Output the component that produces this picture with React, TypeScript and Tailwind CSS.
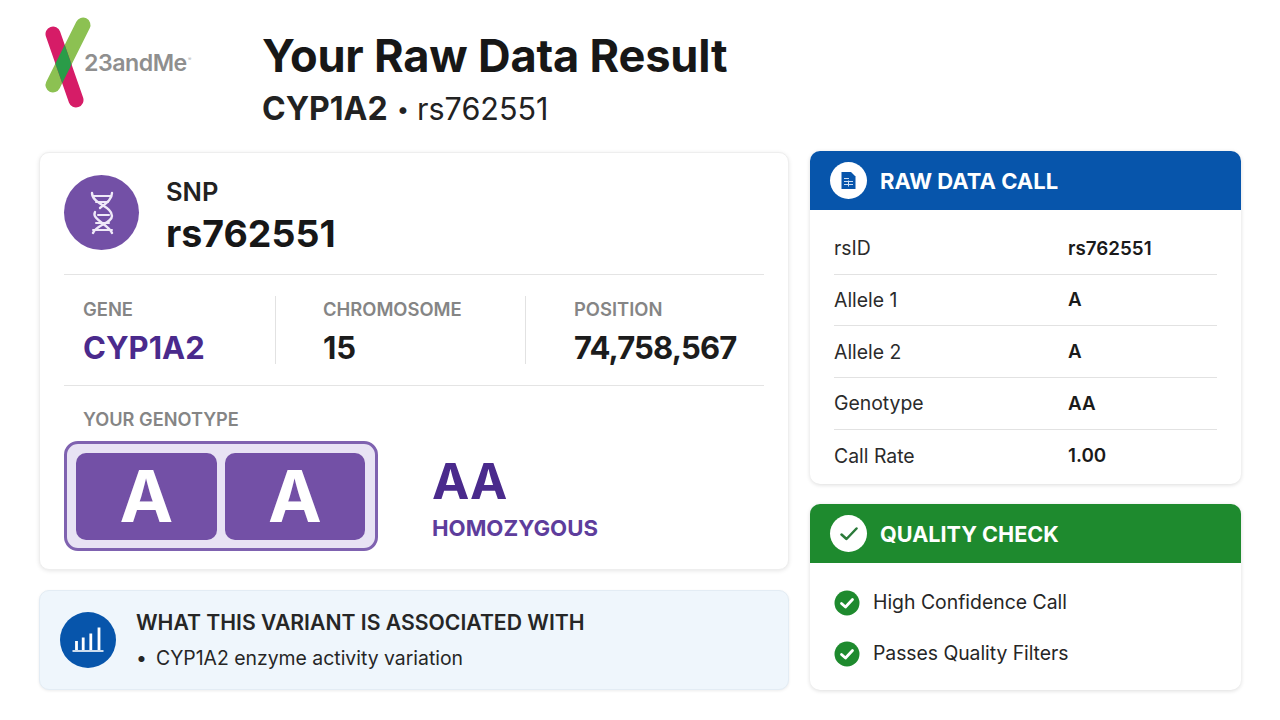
import React from "react";

const font = { fontFamily: "Inter, 'Liberation Sans', sans-serif" };

function Logo() {
  return (
    <div className="relative w-[155px] h-[100px]">
      <svg width="60" height="100" viewBox="0 0 60 100" className="absolute left-0 top-0">
        <defs>
          <clipPath id="band">
            <polygon points="21.08,23.53 44.08,89.53 29.92,94.47 6.92,28.47" />
          </clipPath>
        </defs>
        <line x1="44" y1="17" x2="14" y2="77" stroke="#8cc152" strokeWidth="15" strokeLinecap="round" />
        <line x1="14" y1="26" x2="37" y2="92" stroke="#d61c67" strokeWidth="15" strokeLinecap="round" />
        <line x1="44" y1="17" x2="14" y2="77" stroke="#2a9c48" strokeWidth="15" clipPath="url(#band)" />
      </svg>
      <span className="absolute left-[45px] top-[41px] text-[23.2px] leading-[28px] font-semibold tracking-[-0.5px] text-[#8f8f8f]">23andMe</span>
      <span className="absolute left-[149px] top-[48px] text-[5px] leading-[6px] text-[#aaaaaa]">®</span>
    </div>
  );
}

function Dna() {
  return (
    <svg width="26" height="44" viewBox="0 0 26 44" fill="none" stroke="#efe9f8" strokeWidth="2.4" strokeLinecap="round">
      <path d="M3 2 C3 13 23 15 23 25 C23 32 7 34 4 42" />
      <path d="M23 2 C23 9 16 13 11 17 M6 21 C2 28 20 34 23 42" />
      <path d="M4 5 H22 M7 11 H19 M9 24 H20 M7 32 H20 M4 39 H23" strokeWidth="2" />
    </svg>
  );
}

function Stat({ label, value, color, cls }: { label: string; value: string; color: string; cls: string }) {
  return (
    <div className={cls}>
      <div className="pt-[1px] text-[18.4px] leading-[24px] font-semibold text-[#858585]">{label}</div>
      <div className={`mt-[8px] text-[31px] leading-[38px] font-bold ${color}`}>{value}</div>
    </div>
  );
}

function Row({ k, v, last }: { k: string; v: string; last?: boolean }) {
  return (
    <div className={`flex items-center h-[51.7px] pt-px ${last ? "" : "border-b border-[#e2e2e2]"}`}>
      <span className="w-[234px] text-[19.4px] text-[#2b2b2b]">{k}</span>
      <span className="text-[18.8px] font-semibold text-[#1a1a1a]">{v}</span>
    </div>
  );
}

function Check() {
  return (
    <svg width="26" height="26" viewBox="0 0 26 26">
      <circle cx="13" cy="13" r="12.5" fill="#1e8a2e" />
      <path d="M7.5 13.5 L11.5 17 L18.5 9.5" fill="none" stroke="#fff" strokeWidth="2.8" strokeLinecap="round" strokeLinejoin="round" />
    </svg>
  );
}

export default function App() {
  return (
    <div style={font} className="w-[1280px] h-[720px] bg-white overflow-hidden px-[39px]">
      <header className="flex h-[151px]">
        <div className="pt-[8px] w-[224px] shrink-0"><Logo /></div>
        <div className="pt-[28px]">
          <h1 className="text-[45.2px] leading-[56px] font-bold tracking-[-0.2px] text-[#171717] -ml-px">Your Raw Data Result</h1>
          <p className="mt-[3px] text-[30.5px] leading-[44px] text-[#222222] flex items-center -ml-px">
            <span className="text-[32px] font-bold">CYP1A2</span>
            <span className="ml-[9px] mr-[8px] text-[22px]">•</span>
            <span>rs762551</span>
          </p>
        </div>
      </header>
      <div className="flex gap-[21px]">
        <div className="w-[750px] shrink-0 flex flex-col gap-[20px] pt-px">
          <section className="h-[418px] rounded-[10px] bg-white border border-[#eeeeee] shadow-[0_1px_4px_rgba(0,0,0,0.10)] px-[24px]">
            <div className="flex items-center h-[122px] border-b border-[#e4e4e4] pb-[2px]">
              <div className="w-[75px] h-[75px] rounded-full bg-[#7350a6] flex items-center justify-center"><Dna /></div>
              <div className="ml-[27px] pt-[8px]">
                <div className="text-[25.5px] leading-[30px] font-semibold text-[#222222]">SNP</div>
                <div className="mt-[4px] text-[37.5px] leading-[46px] font-bold text-[#171717]">rs762551</div>
              </div>
            </div>
            <div className="flex items-center h-[111px] border-b border-[#e4e4e4]">
              <Stat cls="w-[212px] pl-[19px] h-[68px] border-r border-[#e2e2e2]" label="GENE" value="CYP1A2" color="text-[#4a2a8c]" />
              <Stat cls="w-[250px] pl-[47px] h-[68px] border-r border-[#e2e2e2]" label="CHROMOSOME" value="15" color="text-[#1c1c1c]" />
              <Stat cls="pl-[48px] h-[68px]" label="POSITION" value="74,758,567" color="text-[#1c1c1c] tracking-[-0.85px]" />
            </div>
            <div className="pl-[19px] pt-[21px] text-[18.2px] leading-[24px] font-semibold text-[#858585]">YOUR GENOTYPE</div>
            <div className="flex items-center mt-[10px]">
              <div className="w-[314px] h-[110px] rounded-[14px] border-[3px] border-[#7f62b0] bg-[#e8e3f4] flex items-center gap-[8px] px-[9px]">
                <div className="w-[141px] h-[87px] rounded-[10px] bg-[#7350a6] flex items-center justify-center text-[72px] font-bold text-white">A</div>
                <div className="w-[140px] h-[87px] rounded-[10px] bg-[#7350a6] flex items-center justify-center text-[72px] font-bold text-white">A</div>
              </div>
              <div className="ml-[54px] pt-[3px]">
                <div className="text-[50px] leading-[54px] font-bold text-[#4a2a8c]">AA</div>
                <div className="mt-[6px] text-[22.2px] leading-[28px] font-bold text-[#5e3d9c]">HOMOZYGOUS</div>
              </div>
            </div>
          </section>
          <section className="h-[100px] rounded-[10px] bg-[#eff6fc] border border-[#e3ecf4] shadow-[0_1px_3px_rgba(0,0,0,0.08)] flex items-center pl-[20px]">
            <div className="w-[56px] h-[56px] rounded-full bg-[#0755ab] flex items-center justify-center">
              <svg width="34" height="30" viewBox="0 0 34 30" fill="none" stroke="#fff">
                <path d="M1.5 26 H32.5" strokeWidth="1.6" />
                <path d="M5.5 25 V16 M12.2 25 V12.5 M19.8 25 V8.5 M28 25 V2.5" strokeWidth="2.8" />
              </svg>
            </div>
            <div className="ml-[20px] pb-[2px]">
              <div className="text-[21.2px] leading-[28px] font-semibold text-[#262626]">WHAT THIS VARIANT IS ASSOCIATED WITH</div>
              <div className="mt-[10px] text-[19.4px] leading-[24px] text-[#262626] flex"><span className="w-[20px]">•</span>CYP1A2 enzyme activity variation</div>
            </div>
          </section>
        </div>
        <div className="w-[431px] shrink-0 flex flex-col gap-[20px]">
          <section className="h-[333px] rounded-[10px] overflow-hidden bg-white shadow-[0_1px_4px_rgba(0,0,0,0.14)]">
            <div className="h-[59px] bg-[#0755ab] flex items-center pl-[20px]">
              <div className="w-[37px] h-[37px] rounded-full bg-white flex items-center justify-center">
                <svg width="15" height="17" viewBox="0 0 15 17">
                  <path d="M0.5 0 H10 L14.5 4.5 V17 H0.5 Z" fill="#0755ab" />
                  <path d="M3 6.5 H8 M3 9.5 H12 M3 12.5 H12 M7.5 8.5 V14.5" stroke="#cfe0f3" strokeWidth="1" fill="none" />
                </svg>
              </div>
              <span className="ml-[13px] pt-[2px] text-[22px] font-bold text-white">RAW DATA CALL</span>
            </div>
            <div className="px-[24px] pt-[13px]">
              <Row k="rsID" v="rs762551" />
              <Row k="Allele 1" v="A" />
              <Row k="Allele 2" v="A" />
              <Row k="Genotype" v="AA" />
              <Row k="Call Rate" v="1.00" last />
            </div>
          </section>
          <section className="h-[186px] rounded-[10px] overflow-hidden bg-white shadow-[0_1px_4px_rgba(0,0,0,0.14)]">
            <div className="h-[59px] bg-[#1e8a2e] flex items-center pl-[20px]">
              <div className="w-[37px] h-[37px] rounded-full bg-white flex items-center justify-center">
                <svg width="18" height="14" viewBox="0 0 18 14"><path d="M1.5 7.5 L6.5 12 L16.5 1.5" fill="none" stroke="#2b7a3a" strokeWidth="2.5" strokeLinecap="round" strokeLinejoin="round" /></svg>
              </div>
              <span className="ml-[13px] pt-[2px] text-[21.6px] font-bold text-white">QUALITY CHECK</span>
            </div>
            <div className="pl-[24px] pt-[27px] flex flex-col gap-[25px]">
              <div className="flex items-center gap-[13px] h-[26px] text-[19.4px] text-[#262626]"><Check />High Confidence Call</div>
              <div className="flex items-center gap-[13px] h-[26px] text-[19.4px] tracking-[-0.05px] text-[#262626]"><Check />Passes Quality Filters</div>
            </div>
          </section>
        </div>
      </div>
    </div>
  );
}
